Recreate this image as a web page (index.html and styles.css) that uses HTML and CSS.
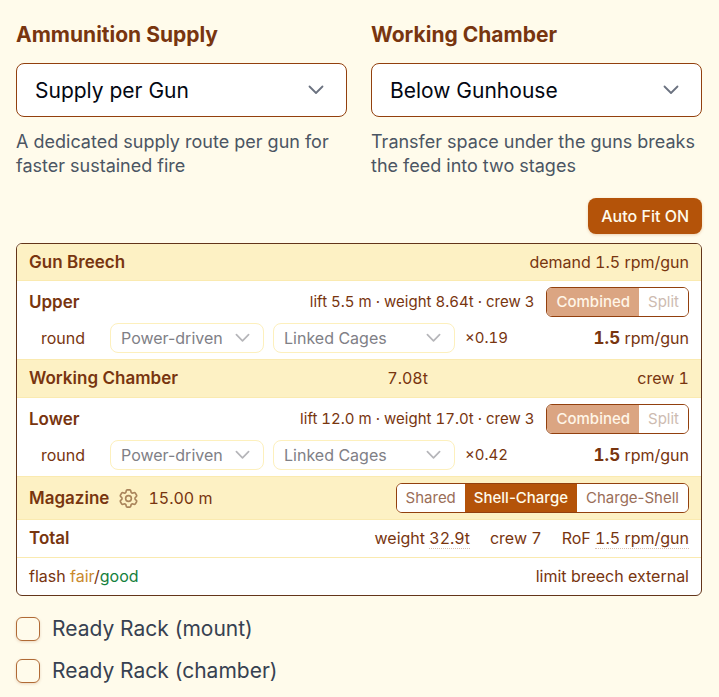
FILE: index.html
```
<!DOCTYPE html>
<html lang="en">
<head>
	<meta charset="UTF-8">
	<meta name="viewport" content="width=device-width, initial-scale=1">
	<title>Ammunition Supply</title>
	<link rel="stylesheet" href="styles.css">
</head>
<body>
	<svg class="defs" width="0" height="0" aria-hidden="true">
		<symbol id="chevron" viewBox="0 0 16 10">
			<path d="M1.5 1.5 8 8l6.500-6.500" fill="none" stroke="currentColor" stroke-width="1.800" stroke-linecap="round" stroke-linejoin="round"/>
		</symbol>
	</svg>

	<div class="options">
		<div class="field">
			<label class="field-label" for="supply">Ammunition Supply</label>
			<div class="select">
				<select id="supply"><option>Supply per Gun</option></select>
				<svg class="chevron"><use href="#chevron"/></svg>
			</div>
			<p class="hint">A dedicated supply route per gun for faster sustained fire</p>
		</div>
		<div class="field">
			<label class="field-label" for="chamber">Working Chamber</label>
			<div class="select">
				<select id="chamber"><option>Below Gunhouse</option></select>
				<svg class="chevron"><use href="#chevron"/></svg>
			</div>
			<p class="hint">Transfer space under the guns breaks the feed into two stages</p>
		</div>
	</div>

	<div class="actions">
		<button class="auto-fit" type="button" aria-pressed="true">Auto Fit ON</button>
	</div>

	<div class="panel">
		<div class="row band first">
			<strong>Gun Breech</strong>
			<span>demand 1.5 rpm/gun</span>
		</div>

		<div class="stage">
			<div class="stage-head">
				<strong>Upper</strong>
				<span class="stats">lift 5.5 m · weight 8.64t · crew 3</span>
				<div class="toggle">
					<button class="on" type="button" disabled>Combined</button>
					<button type="button" disabled>Split</button>
				</div>
			</div>
			<div class="stage-line">
				<span class="kind">round</span>
				<div class="select small">
					<select aria-label="Upper drive" disabled><option>Power-driven</option></select>
					<svg class="chevron"><use href="#chevron"/></svg>
				</div>
				<div class="select small wide">
					<select aria-label="Upper hoist" disabled><option>Linked Cages</option></select>
					<svg class="chevron"><use href="#chevron"/></svg>
				</div>
				<span class="factor">×0.19</span>
				<span class="rate"><b>1.5</b> rpm/gun</span>
			</div>
		</div>

		<div class="row band">
			<strong>Working Chamber</strong>
			<span>7.08t</span>
			<span>crew 1</span>
		</div>

		<div class="stage">
			<div class="stage-head">
				<strong>Lower</strong>
				<span class="stats">lift 12.0 m · weight 17.0t · crew 3</span>
				<div class="toggle">
					<button class="on" type="button" disabled>Combined</button>
					<button type="button" disabled>Split</button>
				</div>
			</div>
			<div class="stage-line">
				<span class="kind">round</span>
				<div class="select small">
					<select aria-label="Lower drive" disabled><option>Power-driven</option></select>
					<svg class="chevron"><use href="#chevron"/></svg>
				</div>
				<div class="select small wide">
					<select aria-label="Lower hoist" disabled><option>Linked Cages</option></select>
					<svg class="chevron"><use href="#chevron"/></svg>
				</div>
				<span class="factor">×0.42</span>
				<span class="rate"><b>1.5</b> rpm/gun</span>
			</div>
		</div>

		<div class="row band">
			<div class="magazine">
				<strong>Magazine</strong>
				<button class="gear" type="button" aria-label="Magazine settings">
					<svg viewBox="0 0 24 24" fill="none" stroke="currentColor" stroke-width="1.700" stroke-linejoin="round">
						<path d="M9.594 3.940c.09-.542.56-.94 1.110-.94h2.593c.55 0 1.020.398 1.110.94l.213 1.281c.063.374.313.686.645.870.074.040.147.083.22.127.325.196.72.257 1.075.124l1.217-.456a1.125 1.125 0 0 1 1.370.490l1.296 2.247a1.125 1.125 0 0 1-.26 1.431l-1.003.827c-.293.241-.438.613-.43.992a7.723 7.723 0 0 1 0 .255c-.008.378.137.750.43.991l1.004.827c.424.350.534.955.26 1.430l-1.298 2.247a1.125 1.125 0 0 1-1.369.491l-1.217-.456c-.355-.133-.75-.072-1.076.124a6.470 6.470 0 0 1-.22.128c-.331.183-.581.495-.644.869l-.213 1.281c-.09.543-.56.940-1.110.940h-2.594c-.55 0-1.019-.398-1.110-.94l-.213-1.281c-.062-.374-.312-.686-.644-.870a6.520 6.520 0 0 1-.22-.127c-.325-.196-.72-.257-1.076-.124l-1.217.456a1.125 1.125 0 0 1-1.369-.49l-1.297-2.247a1.125 1.125 0 0 1 .26-1.431l1.004-.827c.292-.24.437-.613.43-.991a6.932 6.932 0 0 1 0-.255c.007-.38-.138-.751-.43-.992l-1.004-.827a1.125 1.125 0 0 1-.26-1.430l1.297-2.247a1.125 1.125 0 0 1 1.370-.491l1.216.456c.356.133.751.072 1.076-.124.072-.044.146-.086.220-.128.332-.183.582-.495.644-.869z"/>
						<circle cx="12" cy="12" r="3"/>
					</svg>
				</button>
				<span>15.00 m</span>
			</div>
			<div class="toggle">
				<button type="button">Shared</button>
				<button class="on" type="button">Shell-Charge</button>
				<button type="button">Charge-Shell</button>
			</div>
		</div>

		<div class="row">
			<strong>Total</strong>
			<div class="totals">
				<span>weight <span class="tip">32.9t</span></span>
				<span>crew 7</span>
				<span>RoF <span class="tip">1.5 rpm/gun</span></span>
			</div>
		</div>
		<div class="row">
			<span>flash <span class="fair">fair</span>/<span class="good">good</span></span>
			<span>limit breech external</span>
		</div>
	</div>

	<div class="racks">
		<label><input type="checkbox"> Ready Rack (mount)</label>
		<label><input type="checkbox"> Ready Rack (chamber)</label>
	</div>
</body>
</html>
```
FILE: styles.css
```
*{box-sizing: border-box;}
body{margin: 0;padding: 20px 17px 12px 16px;background: #fffbeb;color: #78350f;font: 16px/24px Inter, sans-serif;}
.defs{display: block;}
button,select,input{font: inherit;margin: 0;}
strong{font-size: 17px;font-weight: 600;}
b{font-size: 17px;font-weight: 700;}

.options{display: grid;grid-template-columns: 1fr 1fr;gap: 24px;}
.field-label{display: block;font-size: 21px;line-height: 30px;font-weight: 700;}
.hint{margin: 13px 0 0;font-size: 18px;color: #4b5563;}

.select{position: relative;}
.select select{appearance: none;width: 100%;height: 54px;padding: 2px 48px 0 18px;border: 1px solid #92400e;border-radius: 8px;background: #fff;color: #030712;font-size: 21px;opacity: 1;}
.field .select{margin-top: 13px;}
.chevron{position: absolute;right: 23px;top: 50%;width: 16px;height: 10px;margin-top: -5px;color: #6b7280;pointer-events: none;}
.small{width: 154px;}
.small.wide{width: 182px;}
.small select{display: block;height: 30px;padding: 0 30px 0 10px;border-color: #fdf0bd;color: #808086;font-size: 16px;font-variant-numeric: normal;}
.small .chevron{right: 14px;width: 15px;color: #b5b5b9;}

.actions{display: flex;justify-content: flex-end;margin: 20px 0 9px;}
.auto-fit{height: 36px;padding: 0 13px;border: 0;border-radius: 8px;background: #b45309;color: #fffbeb;font-weight: 500;box-shadow: 0 1px 3px #b4530940;}

.panel{border: 1px solid #63351a;border-radius: 6px;background: #fff;font-variant-numeric: tabular-nums;overflow: hidden;}
.row,.stage{border-bottom: 1px solid #faeab0;padding: 6px 12px;}
.row{display: flex;align-items: center;justify-content: space-between;line-height: 25px;}
.row.first{line-height: 24px;}
.row:last-child{border-bottom: 0;}
.band{background: #fdf1c4;}

.stage{display: grid;gap: 6px;}
.stage-head,.stage-line{display: flex;align-items: center;}
.stage-head{line-height: 26px;}
.stats{margin: 0 12px 0 auto;font-size: 15px;}
.kind{width: 81px;padding-left: 12px;}
.small.wide{margin: 0 10px 0 9px;}
.factor{font-size: 15px;}
.rate{margin-left: auto;}

.toggle{display: flex;height: 30px;border: 1px solid #92400e;border-radius: 6px;background: #fff;font-variant-numeric: normal;overflow: hidden;}
.toggle button{padding: 0 9px;border: 0;background: #fff;color: #9a6e58;font-size: 15px;line-height: 28px;}
.toggle .on{background: #b45309;color: #fffbeb;font-weight: 500;}
.toggle button:disabled{color: #cdbbb1;}
.toggle .on:disabled{background: #dba582;color: #fff6e8;}

.magazine{display: flex;align-items: center;gap: 8px;}
.gear{width: 23px;height: 23px;padding: 0;border: 0;background: none;color: #a9845b;}
.gear svg{display: block;}
.totals{display: flex;gap: 20px;}
.tip{border-bottom: 1px dotted #d8c0b0;}
.fair{color: #ca8a2c;}
.good{color: #15803d;}

.racks{display: grid;gap: 12px;margin-top: 18px;}
.racks label{display: flex;align-items: center;gap: 12px;font-size: 21px;line-height: 30px;color: #374151;}
.racks input{appearance: none;width: 24px;height: 24px;border: 1px solid #b06a35;border-radius: 6px;box-shadow: 0 1px 3px #92400e33;}
```
